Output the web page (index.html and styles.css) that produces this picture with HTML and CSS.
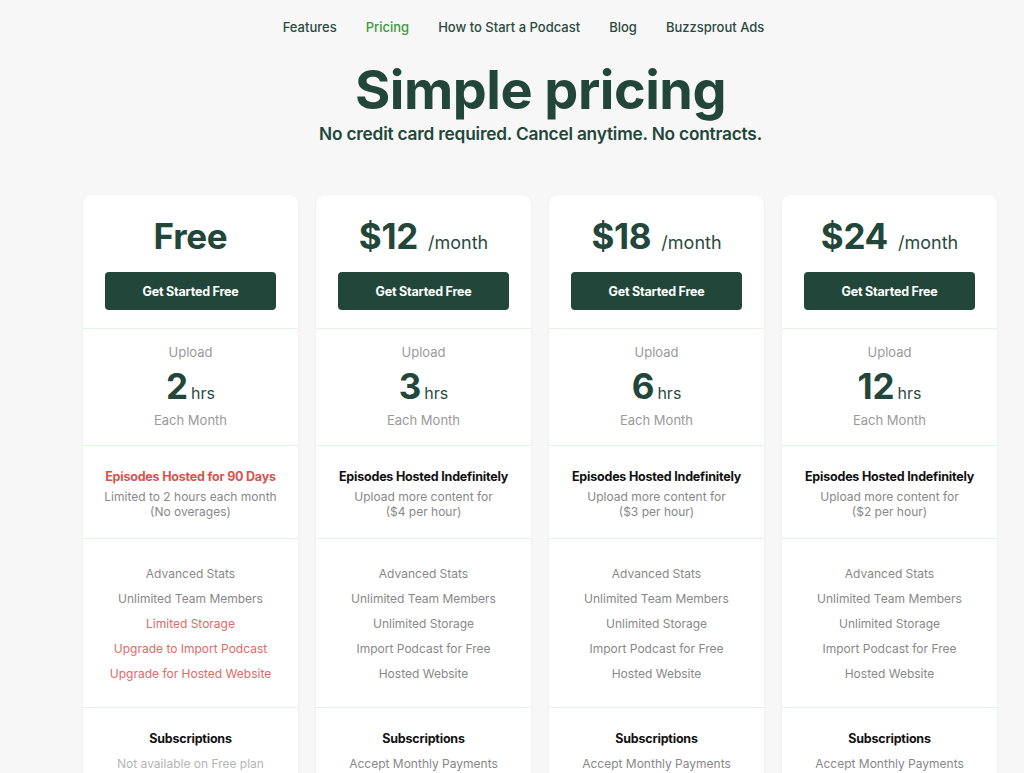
FILE: index.html
```html
<!DOCTYPE html>
<html>
<head>
<meta charset="utf-8">
<link rel="stylesheet" href="styles.css">
</head>
<body>
<nav class="nav">
  <a class="nav-link">Features</a>
  <a class="nav-link active">Pricing</a>
  <a class="nav-link">How to Start a Podcast</a>
  <a class="nav-link">Blog</a>
  <a class="nav-link">Buzzsprout Ads</a>
</nav>
<main class="wrap">
  <h1 class="title">Simple pricing</h1>
  <p class="subtitle">No credit card required. Cancel anytime. No contracts.</p>
  <div class="plans">
    <section class="card">
      <div class="sec top">
        <div class="price"><span class="amount">Free</span></div>
        <a class="btn">Get Started Free</a>
      </div>
      <div class="sec upload">
        <div class="muted">Upload</div>
        <div class="hours"><span class="num">2</span><span class="unit">hrs</span></div>
        <div class="muted">Each Month</div>
      </div>
      <div class="sec hosting">
        <div class="strong red">Episodes Hosted for 90 Days</div>
        <div class="desc">Limited to 2 hours each month<br>(No overages)</div>
      </div>
      <div class="sec features">
        <div>Advanced Stats</div>
        <div>Unlimited Team Members</div>
        <div class="red-light">Limited Storage</div>
        <div class="red-light">Upgrade to Import Podcast</div>
        <div class="red-light">Upgrade for Hosted Website</div>
      </div>
      <div class="sec subs">
        <div class="strong">Subscriptions</div>
        <div class="faint">Not available on Free plan</div>
      </div>
    </section>
    <section class="card">
      <div class="sec top">
        <div class="price"><span class="amount">$12</span><span class="per">/month</span></div>
        <a class="btn">Get Started Free</a>
      </div>
      <div class="sec upload">
        <div class="muted">Upload</div>
        <div class="hours"><span class="num">3</span><span class="unit">hrs</span></div>
        <div class="muted">Each Month</div>
      </div>
      <div class="sec hosting">
        <div class="strong">Episodes Hosted Indefinitely</div>
        <div class="desc">Upload more content for<br>($4 per hour)</div>
      </div>
      <div class="sec features">
        <div>Advanced Stats</div>
        <div>Unlimited Team Members</div>
        <div>Unlimited Storage</div>
        <div>Import Podcast for Free</div>
        <div>Hosted Website</div>
      </div>
      <div class="sec subs">
        <div class="strong">Subscriptions</div>
        <div class="desc">Accept Monthly Payments</div>
      </div>
    </section>
    <section class="card">
      <div class="sec top">
        <div class="price"><span class="amount">$18</span><span class="per">/month</span></div>
        <a class="btn">Get Started Free</a>
      </div>
      <div class="sec upload">
        <div class="muted">Upload</div>
        <div class="hours"><span class="num">6</span><span class="unit">hrs</span></div>
        <div class="muted">Each Month</div>
      </div>
      <div class="sec hosting">
        <div class="strong">Episodes Hosted Indefinitely</div>
        <div class="desc">Upload more content for<br>($3 per hour)</div>
      </div>
      <div class="sec features">
        <div>Advanced Stats</div>
        <div>Unlimited Team Members</div>
        <div>Unlimited Storage</div>
        <div>Import Podcast for Free</div>
        <div>Hosted Website</div>
      </div>
      <div class="sec subs">
        <div class="strong">Subscriptions</div>
        <div class="desc">Accept Monthly Payments</div>
      </div>
    </section>
    <section class="card">
      <div class="sec top">
        <div class="price"><span class="amount">$24</span><span class="per">/month</span></div>
        <a class="btn">Get Started Free</a>
      </div>
      <div class="sec upload">
        <div class="muted">Upload</div>
        <div class="hours"><span class="num">12</span><span class="unit">hrs</span></div>
        <div class="muted">Each Month</div>
      </div>
      <div class="sec hosting">
        <div class="strong">Episodes Hosted Indefinitely</div>
        <div class="desc">Upload more content for<br>($2 per hour)</div>
      </div>
      <div class="sec features">
        <div>Advanced Stats</div>
        <div>Unlimited Team Members</div>
        <div>Unlimited Storage</div>
        <div>Import Podcast for Free</div>
        <div>Hosted Website</div>
      </div>
      <div class="sec subs">
        <div class="strong">Subscriptions</div>
        <div class="desc">Accept Monthly Payments</div>
      </div>
    </section>
  </div>
</main>
</body>
</html>
```

FILE: styles.css
```css
* { box-sizing: border-box; }
html, body { margin: 0; padding: 0; }
body {
  background: #f7f7f7;
  font-family: "Inter", "Noto Sans", sans-serif;
  color: #22473a;
  overflow: hidden;
  height: 773px;
}
.nav {
  display: flex;
  justify-content: center;
  gap: 29px;
  padding-top: 18px;
  height: 46px;
  padding-left: 23px;
}
.nav-link {
  font-size: 13px;
  font-weight: 500;
  color: #2c4a3f;
  line-height: 18px;
}
.nav-link.active { color: #3a9a3c; }
.wrap {
  width: 915px;
  margin-left: 83px;
}
.title {
  margin: 12px 0 0;
  text-align: center;
  font-size: 54px;
  font-weight: 700;
  line-height: 64px;
  letter-spacing: -0.5px;
  color: #22473a;
}
.subtitle {
  margin: 1px 0 0;
  text-align: center;
  font-size: 17.3px;
  font-weight: 600;
  line-height: 22px;
  letter-spacing: -0.2px;
  color: #22473a;
}
.plans {
  display: grid;
  grid-template-columns: repeat(4, 215px);
  gap: 18px;
  margin-top: 50px;
}
.card {
  background: #fff;
  border-radius: 9px 9px 0 0;
  box-shadow: 0 1px 3px rgba(0,0,0,0.06);
  display: flex;
  flex-direction: column;
  text-align: center;
}
.sec {
  border-bottom: 1px solid #e2f5e0;
  display: flex;
  flex-direction: column;
  align-items: center;
}
.top { height: 134px; padding: 21px 22px 0; }
.price {
  display: flex;
  align-items: baseline;
  justify-content: center;
  height: 40px;
}
.amount {
  font-size: 35px;
  font-weight: 700;
  line-height: 40px;
  letter-spacing: -0.3px;
}
.per {
  font-size: 18px;
  font-weight: 400;
  margin-left: 10px;
  color: #2c4a3f;
}
.btn {
  margin-top: 16px;
  width: 171px;
  height: 38px;
  background: #22473a;
  color: #fff;
  border-radius: 4px;
  font-size: 12.5px;
  font-weight: 700;
  letter-spacing: -0.2px;
  display: flex;
  align-items: center;
  justify-content: center;
}
.upload { height: 117px; padding-top: 13px; }
.muted {
  font-size: 13px;
  color: #9a9a9a;
  line-height: 20px;
}
.hours {
  display: flex;
  align-items: baseline;
  justify-content: center;
  height: 48px;
  line-height: 48px;
}
.num {
  font-size: 35px;
  font-weight: 700;
  color: #22473a;
}
.unit {
  font-size: 16px;
  color: #2c4a3f;
  margin-left: 3px;
}
.hosting { height: 93px; padding-top: 22px; }
.strong {
  font-size: 12.5px;
  font-weight: 700;
  color: #111;
  line-height: 17px;
  letter-spacing: -0.2px;
}
.strong.red { color: #d9534f; }
.desc {
  font-size: 12px;
  color: #888;
  line-height: 15px;
  margin-top: 4px;
}
.features {
  height: 169px;
  padding-top: 22px;
  font-size: 12px;
  color: #888;
  line-height: 25px;
}
.red-light { color: #e06a66; }
.subs { padding-top: 22px; border-bottom: none; height: 80px; }
.subs .desc { margin-top: 9px; }
.faint {
  font-size: 12px;
  color: #b5b5b5;
  margin-top: 9px;
  line-height: 15px;
}
```
